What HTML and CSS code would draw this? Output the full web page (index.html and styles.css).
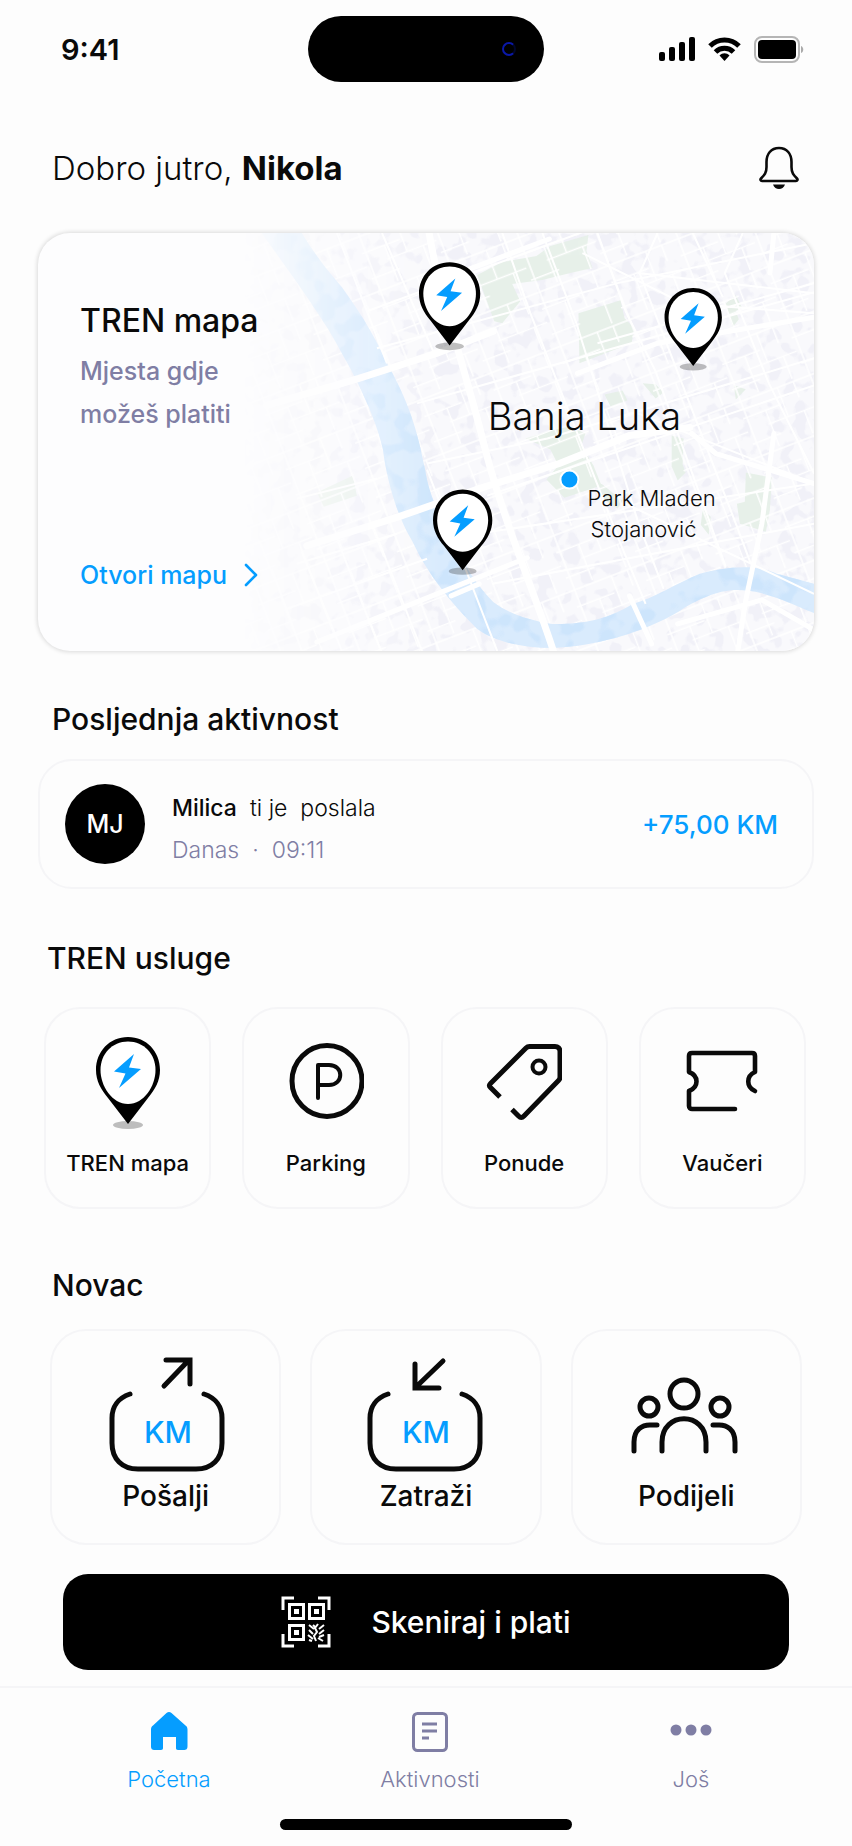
FILE: index.html
```html
<!DOCTYPE html>
<html lang="bs">
<head>
  <meta charset="utf-8">
  <meta name="viewport" content="width=device-width, initial-scale=1">
  <title>TREN</title>
  <link rel="stylesheet" href="styles.css">
</head>
<body>
<svg class="defs" width="0" height="0" aria-hidden="true">
  <!-- location pin, used on the map and in the services list -->
  <symbol id="pin" viewBox="0 0 66 94">
    <ellipse cx="33" cy="89" rx="15" ry="4" fill="#000" opacity=".25"/>
    <path d="M33 1C14.500 1 1 15.500 1 34c0 11 5 19.500 12 28l20 26 20-26c7-8.500 12-17 12-28C65 15.500 51.500 1 33 1z" fill="#000"/>
    <path d="M33 5.500C17 5.500 5.500 18 5.500 34S17 68 33 68s27.500-18 27.500-34S49 5.500 33 5.500z" fill="#fff"/>
    <path d="M39 18 19 35.500l11.500 2L24 52l22-19-12-1.500z" fill="#059dff"/>
  </symbol>
</svg>

<header class="status">
  <div class="time">9:41</div>
  <div class="island"><span class="lens"></span></div>
  <div class="signals">
    <svg width="148" height="28" viewBox="0 0 148 28" aria-hidden="true">
      <rect x="2" y="17" width="6" height="9" rx="2"/>
      <rect x="12" y="12" width="6" height="14" rx="2"/>
      <rect x="22" y="7" width="6" height="19" rx="2"/>
      <rect x="32" y="2" width="6" height="24" rx="2"/>
      <g fill="none" stroke="#000" stroke-width="5">
        <path d="M53 11c8-8 21-8 29 0"/>
        <path d="M58.500 17c5-5 13-5 18 0"/>
      </g>
      <path d="M62.500 20.500c3-3 7-3 10 0l-5 5.500z"/>
      <rect x="98" y="2" width="44" height="25" rx="7" fill="none" stroke="#b5b5b5" stroke-width="2"/>
      <rect x="101" y="5" width="38" height="19" rx="4"/>
      <path d="M144 11c3 1 3 6 0 7z" fill="#aaa"/>
    </svg>
  </div>
</header>

<main class="page">
  <div class="greeting">
    <h1>Dobro jutro, <b>Nikola</b></h1>
    <button class="bell" aria-label="Obavijesti">
      <svg width="42" height="46" viewBox="0 0 42 46" fill="none" stroke="#0a0a0a" stroke-width="2.600" stroke-linejoin="round">
        <path d="M21 3C13 3 8.500 9 8.500 17v5c0 6-2 8-5.500 11.500-1 1-.5 2.500 1 2.500h34c1.500 0 2-1.500 1-2.500-3.500-3.500-5.500-5.500-5.500-11.500v-5C33.500 9 29 3 21 3z"/>
        <path d="M15 39.500h12c-1 3-3.500 4.500-6 4.500s-5-1.500-6-4.500z" fill="#0a0a0a" stroke="none"/>
      </svg>
    </button>
  </div>

  <section class="map-card">
    <svg class="map" viewBox="0 0 776 417" preserveAspectRatio="xMaxYMid slice" role="img" aria-label="Mapa Banja Luke">
      <defs>
        <!-- irregular patches for the built-up area and the water -->
        <filter id="patches" x="0" y="0" width="1" height="1" color-interpolation-filters="sRGB">
          <feTurbulence type="fractalNoise" baseFrequency=".07" numOctaves="2" seed="4"/>
          <feColorMatrix values="0 0 0 0 .93  0 0 0 0 .93  0 0 0 0 .965  12 0 0 0 -6.200"/>
          <feComposite in2="SourceGraphic" operator="in"/>
        </filter>
        <filter id="waves" x="0" y="0" width="1" height="1" color-interpolation-filters="sRGB">
          <feTurbulence type="fractalNoise" baseFrequency=".05" numOctaves="2" seed="9"/>
          <feColorMatrix values="0 0 0 0 .79  0 0 0 0 .89  0 0 0 0 .99  9 0 0 0 -4.500"/>
          <feComposite in2="SourceGraphic" operator="in"/>
        </filter>
        <pattern id="lanes" width="74" height="58" patternUnits="userSpaceOnUse" patternTransform="rotate(-21)">
          <path d="M0 3h74M0 20h40M22 34h52M0 47h30M4 0v58M24 20v38M43 3v31M60 34v24M60 3v17" fill="none" stroke="#fff" stroke-width="1.500"/>
        </pattern>
        <linearGradient id="fade" x1="0" x2="1" y1="0" y2="0">
          <stop offset=".26" stop-color="#000"/>
          <stop offset=".37" stop-color="#777"/>
          <stop offset=".52" stop-color="#fff"/>
        </linearGradient>
        <mask id="fadeLeft"><rect width="776" height="417" fill="url(#fade)"/></mask>
        <path id="river" d="M225 0C242 24 270 62 292 97C316 138 338 180 346 216C350 248 360 282 375 307C391 341 412 367 440 395C458 408 486 414 515 414C557 412 603 400 642 377C676 356 695 353 722 359C746 365 758 372 776 379V350L739 340C716 329 684 334 662 340C638 350 615 365 595 370C566 388 540 390 515 390C491 386 472 380 456 368C440 352 429 334 420 315C402 282 392 262 388 236C380 195 371 167 350 130C336 98 318 72 305 54C286 32 276 18 265 0Z"/>
      </defs>
      <g mask="url(#fadeLeft)">
        <rect width="776" height="417" fill="#f9f9fc"/>
        <rect width="776" height="417" filter="url(#patches)" opacity=".6"/>
        <!-- parks -->
        <g fill="#e6f0e8" opacity=".9">
          <path d="M440 42l25-13 34-6 14-10 38-11-2 16 6 17-22 5-28 7-30 4 8 17-18 22-8-2z"/>
          <path d="M541 80l42-13 4 18 10 10-3 15-52 20z"/>
          <path d="M488 205l26-8 18-4 16 7-4 12 12 20 8 20-37 12-18-18 12-14-8-16z"/>
          <path d="M634 202l12 3-1 26 3 8-8 8-6-14zM708 239l26 5-2 32-4 22-26-8-3-20 8-2z"/>
          <path d="M567 161l18-4 5 10-17 6zM605 150l13 1 8 8-8 6zM688 70l10-8 6 12-6 4 3 8-6 8zM280 259l36-17 4 20-33 11z"/>
          <path d="M557 247l8 4 20 16-5 8-13-9zM665 275l8 8-2 18-8-10zM696 152l12 4-10 10z"/>
        </g>
        <rect width="776" height="417" fill="url(#lanes)"/>
        <!-- river -->
        <use href="#river" fill="#d9ebfd"/>
        <use href="#river" filter="url(#waves)" opacity=".7"/>
        <!-- streets -->
        <g fill="none" stroke="#fff" stroke-width="2">
          <path d="M300 0l50 130M390 236l70 181M345 0l52 120M465 0l28 80 90 230 25 60M505 0l34 90 62 200 25 65M560 0l28 78 30 60 70 195M620 0l-18 40 96 250 15 40M705 0l-18 40 44 110 45 90M655 0l30 64"/>
          <path d="M330 78l240-88M340 115l240-65 196-40M380 170l396-111M260 265l80-20M390 230l120-25 266-80M260 330l100-30M450 262l326-110M440 300l336-50M250 375l140-50M455 350l321-60M560 110l216-60M600 40l176 20M600 180l176 70M588 270l188 90M545 20l100 50 131 10"/>
          <path d="M235 335l30 82M265 318l40 99M300 305l44 112M335 290l50 127"/>
        </g>
        <g fill="none" stroke="#fff" stroke-width="7" stroke-linecap="round">
          <path d="M392 0c10 60 34 130 52 200 20 84 54 160 72 217"/>
          <path d="M230 172l92-27 78-25 56-22M270 312l92-29 80-28 80-25 70-28 60-8"/>
        </g>
        <g fill="none" stroke="#fff" stroke-width="5" stroke-linecap="round">
          <path d="M432 36l80-30M540 140l80-30 156-26M654 200l24 20 98 30"/>
          <path d="M736 0l-4 40M736 200l-12 90-16 76-8 51M592 362l22 48M640 390l84-24 52 30"/>
          <path d="M414 362l28-12M280 408l90-36 120-48"/>
        </g>
      </g>
      <use href="#pin" x="381" y="27" width="63" height="92"/>
      <use href="#pin" x="626" y="52" width="59" height="88"/>
      <use href="#pin" x="395" y="254" width="61" height="89"/>
      <circle cx="532" cy="246" r="9" fill="#059dff" stroke="#fff" stroke-width="2"/>
      <g class="map-labels" text-anchor="middle">
        <text class="city" x="547" y="197">Banja Luka</text>
        <text x="614" y="272">Park Mladen</text>
        <text x="606" y="303">Stojanović</text>
      </g>
    </svg>
    <div class="map-info">
      <h2>TREN mapa</h2>
      <p>Mjesta gdje<br>možeš platiti</p>
      <a href="#mapa">Otvori mapu
        <svg width="16" height="24" viewBox="0 0 16 24" fill="none" stroke="#059dff" stroke-width="2.600" stroke-linecap="round" stroke-linejoin="round"><path d="M3 2l10 10L3 22"/></svg>
      </a>
    </div>
  </section>

  <h2 class="title">Posljednja aktivnost</h2>
  <section class="activity">
    <div class="avatar">MJ</div>
    <div class="details">
      <p><b>Milica</b> <span>ti je</span> <span>poslala</span></p>
      <p class="when"><span>Danas</span> <span>·</span> <span>09:11</span></p>
    </div>
    <div class="amount">+75,00 KM</div>
  </section>

  <h2 class="title title-services">TREN usluge</h2>
  <nav class="services" aria-label="TREN usluge">
    <a href="#mapa">
      <svg width="68" height="94"><use href="#pin"/></svg>
      <span>TREN mapa</span>
    </a>
    <a href="#parking">
      <svg width="76" height="94" viewBox="0 0 76 94" fill="none" stroke="#0a0a0a" stroke-width="5" stroke-linecap="round" stroke-linejoin="round">
        <ellipse cx="39" cy="45" rx="35" ry="35.500"/>
        <path d="M30 62V29h11c15 0 15 20 0 20H30" stroke-width="4"/>
      </svg>
      <span>Parking</span>
    </a>
    <a href="#ponude">
      <svg width="76" height="94" viewBox="0 0 76 94" fill="none" stroke="#0a0a0a" stroke-width="5" stroke-linejoin="round">
        <path d="M14 61 4.500 51.500c-1.500-1.500-1.500-2.500 0-4L40 12c1-1 2-1.500 3.500-1.500H69c3 0 5 2 5 5V41c0 1.500-.5 2.500-1.500 3.500L38 80c-2 2-3.500 2-5.500 0L26 73.500"/>
        <circle cx="53" cy="31" r="6.500" stroke-width="4"/>
      </svg>
      <span>Ponude</span>
    </a>
    <a href="#vauceri">
      <svg width="76" height="94" viewBox="0 0 76 94" fill="none" stroke="#0a0a0a" stroke-width="4.600" stroke-linecap="round" stroke-linejoin="round">
        <path d="M51 73H8c-1.500 0-3-1-3-3V55c10-4 10-15 0-19V20c0-2 1-3 3-3h60c2 0 3 1 3 3v16c-9 4-9 15 0 19"/>
      </svg>
      <span>Vaučeri</span>
    </a>
  </nav>

  <h2 class="title title-money">Novac</h2>
  <div class="money">
    <button>
      <svg width="120" height="120" viewBox="0 0 120 120" fill="none" stroke="#0a0a0a" stroke-width="5" stroke-linecap="round">
        <path d="M58 31 82 6M60 5h24v24"/>
        <path d="M24 39C12 43 6 52 6 63v25c0 16 10 26 26 26h58c16 0 26-10 26-26V63c0-11-6-20-18-24"/>
        <text x="62" y="88" text-anchor="middle">KM</text>
      </svg>
      <span>Pošalji</span>
    </button>
    <button>
      <svg width="120" height="120" viewBox="0 0 120 120" fill="none" stroke="#0a0a0a" stroke-width="5" stroke-linecap="round">
        <path d="M77 6 51 31M49 9v24h24"/>
        <path d="M22 39C10 43 4 52 4 63v25c0 16 10 26 26 26h58c16 0 26-10 26-26V63c0-11-6-20-18-24"/>
        <text x="60" y="88" text-anchor="middle">KM</text>
      </svg>
      <span>Zatraži</span>
    </button>
    <button>
      <svg width="120" height="120" viewBox="0 0 120 120" fill="none" stroke="#0a0a0a" stroke-width="5" stroke-linecap="round">
        <circle cx="58" cy="39" r="14"/>
        <circle cx="23" cy="52" r="9"/>
        <circle cx="94" cy="52" r="9"/>
        <path d="M36 96V87c0-31 44-31 44 0v9M8 96V87c0-12 8-18 18-17h5M109 96V87c0-12-8-18-18-17h-4"/>
      </svg>
      <span>Podijeli</span>
    </button>
  </div>

  <button class="scan">
    <svg width="50" height="52" viewBox="0 0 50 52" fill="none" stroke="#fff" stroke-width="3">
      <path d="M2 14V2h11M37 2h11v12M2 38v12h11M37 50h11V38"/>
      <path d="M8.500 8.500h14v14h-14zM28.500 8.500h14v14h-14zM8.500 29.500h14v14h-14z"/>
      <path d="M13 13h5v5h-5zM33 13h5v5h-5zM13 34h5v5h-5z" fill="#fff" stroke="none"/>
      <path d="M28 29l5 4M28 34l4 4M27 39l5 4M28 44l3 1M37 28l-3 4 2 4-3 4 2 5M43 29l-5 4M43 34l-5 4M43 39l-5 2M42 45l-5-3M32 29l2 2" stroke-width="2"/>
    </svg>
    <span>Skeniraj i plati</span>
  </button>
</main>

<nav class="tabs" aria-label="Glavni meni">
  <a class="active" href="#pocetna">
    <svg width="40" height="42" viewBox="0 0 40 42" fill="currentColor"><path d="M17.500 2a4 4 0 0 1 5 0l14 12.500c1.500 1 2 2.500 2 4V35c0 3-1 4-4 4H29c-1.500 0-2-.8-2-2V26H14v11c0 1.200-.5 2-2 2H6c-3 0-4-1-4-4V18.500c0-1.500.5-3 2-4z"/></svg>
    <span>Početna</span>
  </a>
  <a href="#aktivnosti">
    <svg width="40" height="42" viewBox="0 0 40 42" fill="none" stroke="currentColor" stroke-width="3"><rect x="3.500" y="2.500" width="33" height="37" rx="4"/><path d="M12 13h15M12 20h15M12 27h7"/></svg>
    <span>Aktivnosti</span>
  </a>
  <a href="#jos">
    <svg width="42" height="42" viewBox="0 0 42 42" fill="currentColor"><circle cx="6" cy="19" r="5.500"/><circle cx="21" cy="19" r="5.500"/><circle cx="36" cy="19" r="5.500"/></svg>
    <span>Još</span>
  </a>
</nav>
<div class="home-bar"></div>
</body>
</html>
```
FILE: styles.css
```css
* {
  box-sizing: border-box;
}
body {
  margin: 0;
  background: #fdfdfd;
  color: #0a0a0a;
  font-family: Inter, "Liberation Sans", sans-serif;
}
h1, h2, p {
  margin: 0;
}
a {
  color: inherit;
  text-decoration: none;
}
button {
  border: none;
  background: none;
  padding: 0;
  color: inherit;
  font-family: inherit;
  cursor: pointer;
}
svg {
  display: block;
}
.defs {
  position: absolute;
}

/* status bar */
.status {
  display: grid;
  grid-template-columns: 1fr 236px 1fr;
  align-items: center;
  padding: 16px 47px 0;
}
.time {
  padding-left: 14px;
  font-size: 29px;
  font-weight: 600;
}
.island {
  display: flex;
  align-items: center;
  justify-content: flex-end;
  height: 66px;
  padding-right: 28px;
  border-radius: 33px;
  background: #000;
}
.lens {
  width: 14px;
  height: 14px;
  border: 2px solid #0a18a8;
  border-right-color: #00062c;
  border-radius: 50%;
}
.signals {
  display: flex;
  justify-content: flex-end;
}

.page {
  padding: 0 38px;
}
.greeting {
  display: flex;
  align-items: center;
  justify-content: space-between;
  margin: 62px 14px 41px;
}
.greeting h1 {
  font-size: 33px;
  font-weight: 300;
  line-height: 48px;
}
.greeting b {
  font-weight: 700;
}

/* map */
.map-card {
  position: relative;
  height: 418px;
  border-radius: 32px;
  overflow: hidden;
  background: #fdfdfe;
  box-shadow: 0 0 4px 1px rgba(0, 0, 0, .14);
}
.map {
  width: 100%;
  height: 100%;
}
.map-info {
  position: absolute;
  top: 0;
  bottom: 0;
  left: 0;
  display: flex;
  flex-direction: column;
  padding: 68px 42px 56px;
}
.map-info h2 {
  font-size: 32px;
  font-weight: 500;
  line-height: 40px;
}
.map-info p {
  margin-top: 9px;
  color: #7f7ea4;
  font-size: 25px;
  font-weight: 500;
  line-height: 43px;
}
.map-info a {
  display: flex;
  align-items: center;
  gap: 16px;
  margin-top: auto;
  color: #059dff;
  font-size: 25px;
  font-weight: 500;
  line-height: 40px;
}
.map-labels {
  fill: #0a0a0a;
  font-size: 22px;
  font-weight: 300;
}
.map-labels .city {
  font-size: 38px;
}

.title {
  margin: 48px 14px 20px;
  font-size: 30px;
  font-weight: 500;
  line-height: 40px;
}
.title-services {
  margin: 49px 9px 29px;
}
.title-money {
  margin: 56px 14px 24px;
}

/* last activity */
.activity {
  display: flex;
  align-items: center;
  gap: 27px;
  height: 130px;
  padding: 0 34px 0 25px;
  border: 2px solid #f5f5f7;
  border-radius: 34px;
}
.avatar {
  display: flex;
  align-items: center;
  justify-content: center;
  width: 80px;
  height: 80px;
  border-radius: 50%;
  background: #000;
  color: #fff;
  font-size: 25px;
  font-weight: 500;
}
.details {
  flex: 1;
  padding-top: 9px;
}
.details p {
  display: flex;
  gap: 13px;
  font-size: 23px;
  font-weight: 300;
  line-height: 42px;
}
.details b {
  font-weight: 500;
}
.details .when {
  color: #7f7ea4;
}
.amount {
  color: #059dff;
  font-size: 26px;
  font-weight: 500;
}

/* services */
.services {
  display: grid;
  grid-template-columns: repeat(4, 1fr);
  gap: 31px;
  margin: 0 8px 0 6px;
}
.services a {
  display: flex;
  flex-direction: column;
  align-items: center;
  gap: 17px;
  padding: 27px 0 28px;
  border: 2px solid #f5f5f7;
  border-radius: 36px;
  font-size: 22px;
  font-weight: 500;
  line-height: 32px;
}

/* money */
.money {
  display: grid;
  grid-template-columns: repeat(3, 1fr);
  gap: 29px;
  margin: 0 12px;
}
.money button {
  display: flex;
  flex-direction: column;
  align-items: center;
  padding: 24px 0 26px;
  border: 2px solid #f5f5f7;
  border-radius: 36px;
  font-size: 28px;
  font-weight: 500;
  line-height: 42px;
}
.money text {
  fill: #059dff;
  stroke: none;
  font-size: 30px;
  font-weight: 500;
}

.scan {
  display: flex;
  align-items: center;
  justify-content: center;
  gap: 40px;
  width: calc(100% - 50px);
  height: 96px;
  margin: 29px 25px 16px;
  border-radius: 25px;
  background: #000;
  color: #fff;
  font-size: 30px;
  font-weight: 500;
}

/* bottom tabs */
.tabs {
  display: flex;
  justify-content: space-between;
  padding: 23px 101px 0 109px;
  border-top: 2px solid #f5f5f7;
  color: #7f7ea4;
}
.tabs a {
  display: flex;
  flex-direction: column;
  align-items: center;
  gap: 10px;
  width: 120px;
  font-size: 22px;
  font-weight: 300;
  line-height: 32px;
}
.tabs .active {
  color: #059dff;
}
.home-bar {
  width: 292px;
  height: 11px;
  margin: 24px auto 16px;
  border-radius: 6px;
  background: #000;
}
```
